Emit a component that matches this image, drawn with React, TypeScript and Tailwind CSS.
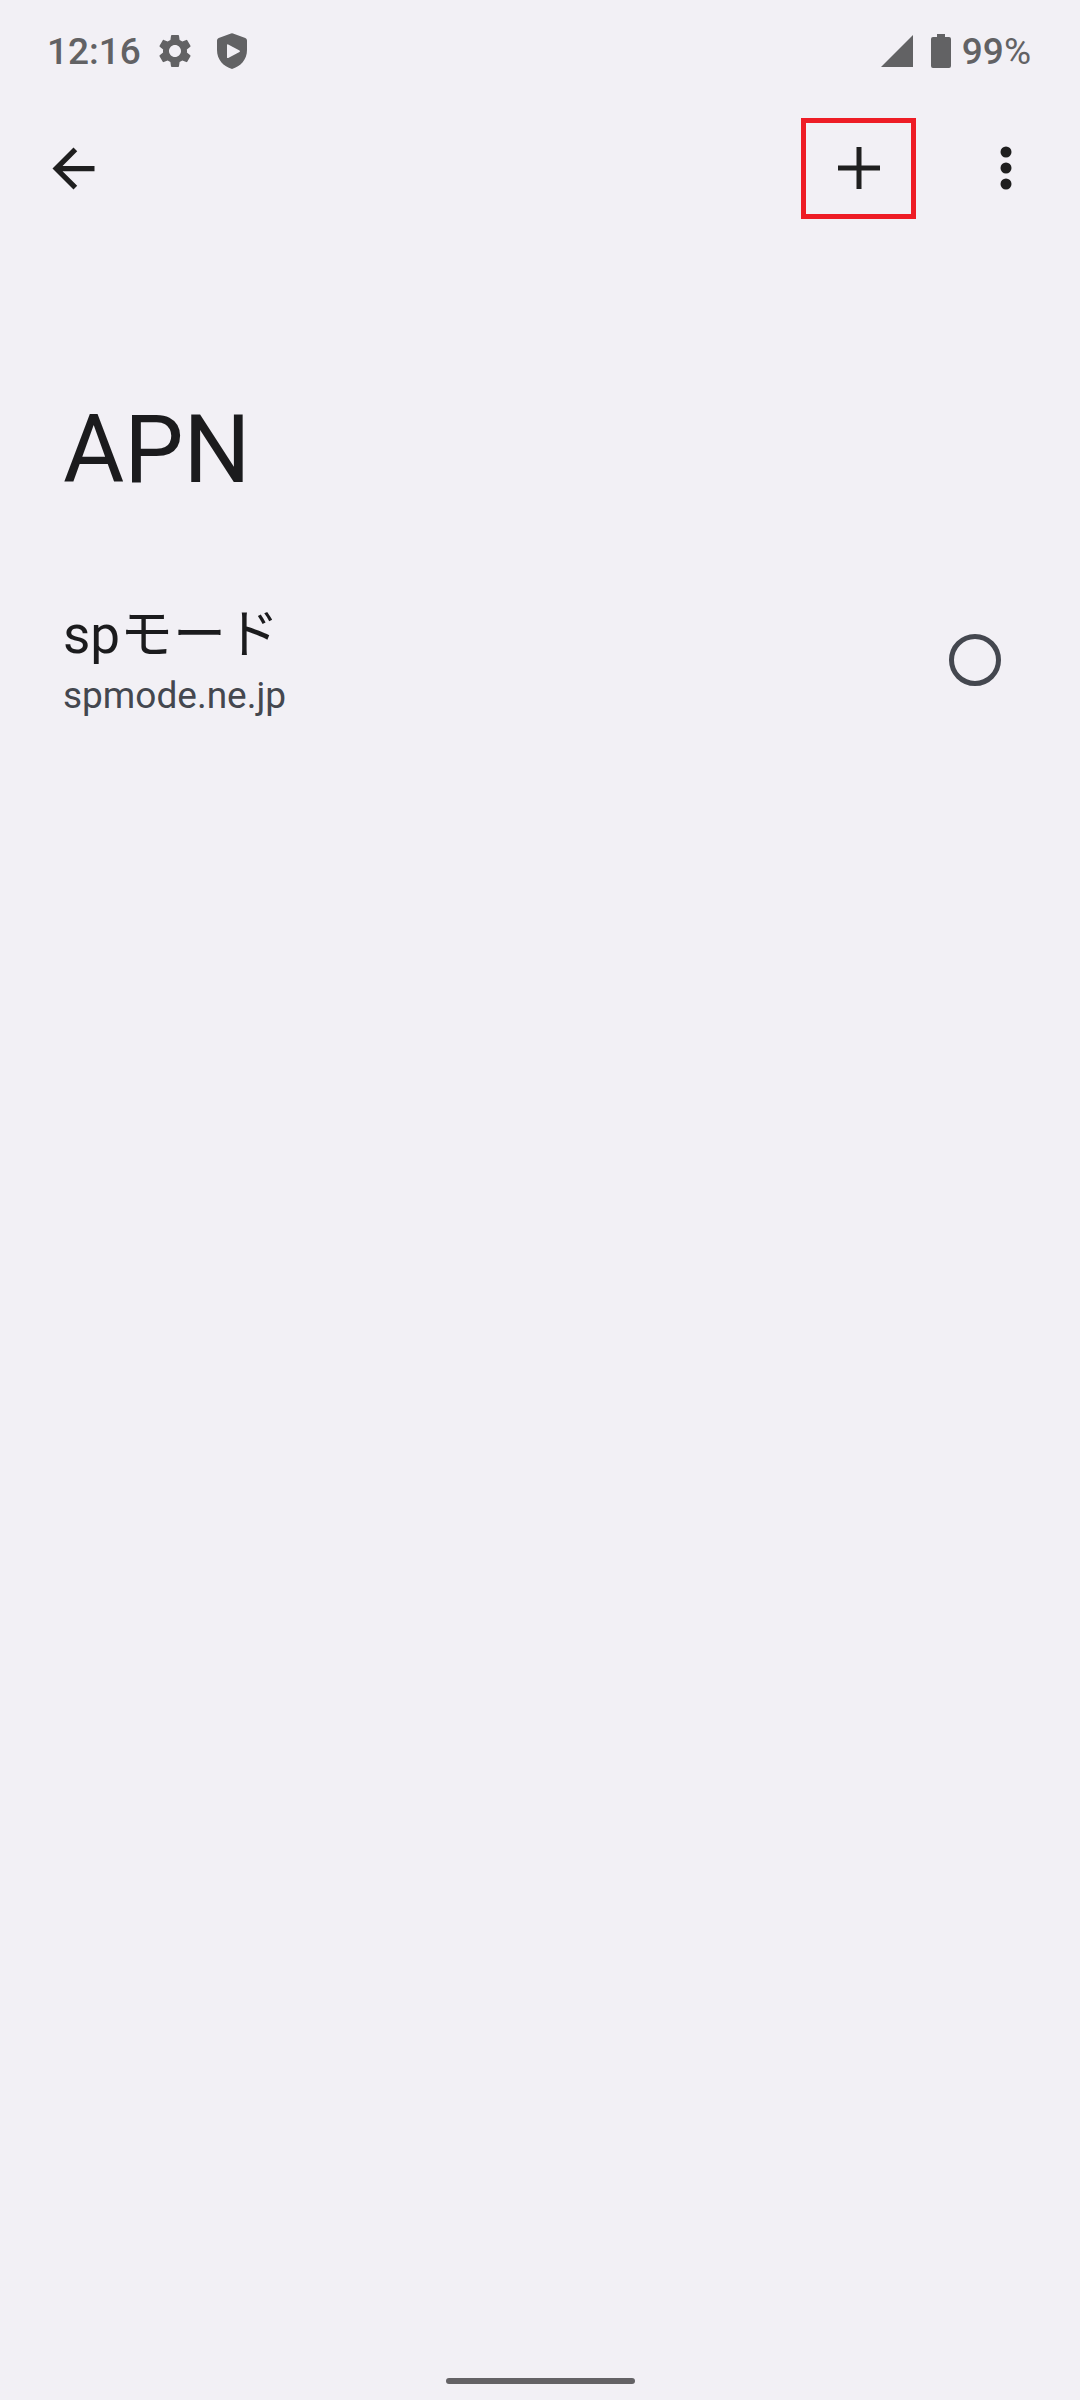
import { useState } from "react";
import type { ReactNode } from "react";
import { MdSettings } from "react-icons/md";

const APNS = [{ id: "spmode", name: "spモード", host: "spmode.ne.jp" }];

function ShieldPlayIcon() {
  return (
    <svg viewBox="0 0 30 36" className="h-9 w-[30px]" fill="currentColor" aria-hidden="true">
      <path
        fillRule="evenodd"
        d="M14 .4a3 3 0 0 1 2 0L28.300 4.900Q30 5.600 30 7.500V17C30 26.500 23.500 33.500 15 36 6.500 33.500 0 26.500 0 17V7.500Q0 5.600 1.700 4.900ZM10 12.200V24.200Q10 25.500 11.200 24.900L22.500 18.900Q23.500 18.200 22.500 17.500L11.200 11.500Q10 11 10 12.200Z"
      />
    </svg>
  );
}

function SignalIcon() {
  return (
    <svg viewBox="0 0 32 32" className="size-8" fill="currentColor" aria-hidden="true">
      <path d="M32 0V32H0Z" />
    </svg>
  );
}

function BatteryIcon() {
  return (
    <svg viewBox="0 0 20 34" className="h-[34px] w-5" fill="currentColor" aria-hidden="true">
      <path d="M6 0h8v3h4a2 2 0 0 1 2 2v27a2 2 0 0 1-2 2H2a2 2 0 0 1-2-2V5a2 2 0 0 1 2-2h4Z" />
    </svg>
  );
}

function StatusBar() {
  return (
    <div className="flex h-[102px] items-center justify-between pr-[49px] pl-[47px] text-[37px] leading-[48px] font-medium text-[#626264]">
      <div className="flex items-center">
        <span className="pt-0.5">12:16</span>
        <MdSettings className="ml-[14px] size-10" aria-hidden="true" />
        <span className="ml-[22px]">
          <ShieldPlayIcon />
        </span>
      </div>
      <div className="flex items-center">
        <SignalIcon />
        <span className="ml-[18px]">
          <BatteryIcon />
        </span>
        <span className="ml-[11px] pt-0.5">
          99<span className="font-normal">%</span>
        </span>
      </div>
    </div>
  );
}

function ToolbarButton({ label, children }: { label: string; children: ReactNode }) {
  return (
    <button type="button" aria-label={label} className="flex h-[101px] w-[115px] items-center justify-center">
      {children}
    </button>
  );
}

function Toolbar() {
  return (
    <header className="flex h-[132px] items-center justify-between pr-[17px] pl-4 text-[#1f1f1f]">
      <ToolbarButton label="戻る">
        <svg viewBox="0 0 24 24" className="size-[63px]" fill="currentColor" aria-hidden="true">
          <path d="M20 11H7.830l5.590-5.590L12 4l-8 8 8 8 1.410-1.410L7.830 13H20v-2z" />
        </svg>
      </ToolbarButton>
      <div className="flex items-center gap-8">
        {/* Highlighted action */}
        <div className="border-[5px] border-[#ee1c25]">
          <button type="button" aria-label="追加" className="flex h-[91px] w-[105px] items-center justify-center">
            <svg viewBox="0 0 42 42" className="size-[42px]" fill="none" stroke="currentColor" strokeWidth="5" aria-hidden="true">
              <path d="M21 0V42M0 21H42" />
            </svg>
          </button>
        </div>
        <ToolbarButton label="その他のオプション">
          <svg viewBox="0 0 12 44" className="h-11 w-3" fill="currentColor" aria-hidden="true">
            <circle cx="6" cy="6" r="5.500" />
            <circle cx="6" cy="22" r="5.500" />
            <circle cx="6" cy="38" r="5.500" />
          </svg>
        </ToolbarButton>
      </div>
    </header>
  );
}

export default function App() {
  const [selected, setSelected] = useState("");

  return (
    <div className="flex min-h-screen flex-col bg-[#f2f0f5] font-[Roboto,'Noto_Sans_CJK_JP',sans-serif]" lang="ja">
      <StatusBar />
      <Toolbar />

      <main className="flex-1 pt-40">
        <h1 className="px-[63px] text-[94px] leading-[112px] text-[#1b1b1d]">APN</h1>

        <ul className="mt-[93px]">
          {APNS.map((apn) => (
            <li key={apn.id}>
              <label htmlFor={apn.id} className="flex items-center justify-between pr-[79px] pl-[63px]">
                <span className="flex flex-col">
                  <span className="text-[53px] leading-[72px] text-[#1b1b1d]">{apn.name}</span>
                  <span className="text-[37px] leading-[50px] text-[#44474f]">{apn.host}</span>
                </span>
                <input
                  id={apn.id}
                  type="radio"
                  name="apn"
                  checked={selected === apn.id}
                  onChange={() => setSelected(apn.id)}
                  className="size-[52px] appearance-none rounded-full border-[5px] border-[#44474f] checked:bg-[#44474f] checked:bg-clip-content checked:p-2"
                />
              </label>
            </li>
          ))}
        </ul>
      </main>

      {/* Gesture handle */}
      <div className="flex justify-center pb-4">
        <div className="h-[6px] w-[189px] rounded-full bg-[#646265]" />
      </div>
    </div>
  );
}
